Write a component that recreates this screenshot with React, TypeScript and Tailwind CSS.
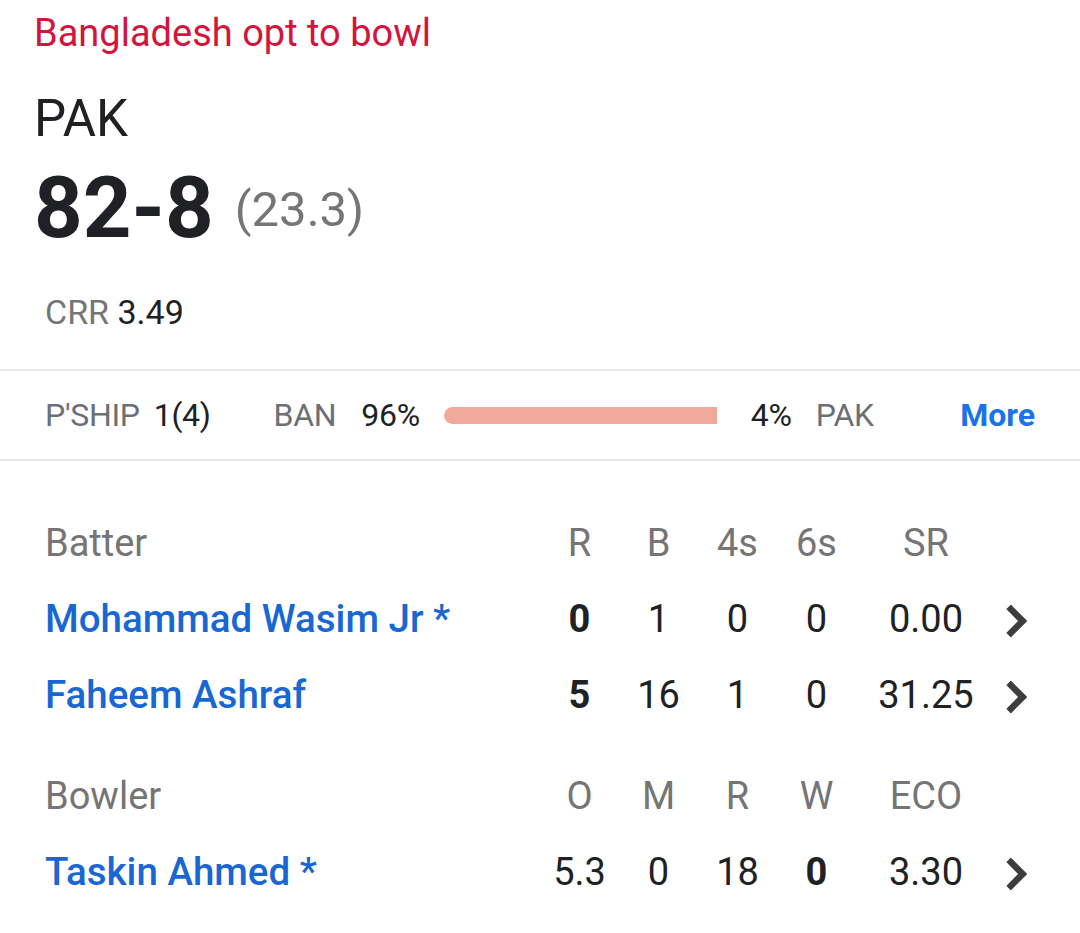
type StatRow = {
  name: string;
  cells: { v: string; bold?: boolean }[];
};

const batters: StatRow[] = [
  {
    name: 'Mohammad Wasim Jr *',
    cells: [{ v: '0', bold: true }, { v: '1' }, { v: '0' }, { v: '0' }, { v: '0.00' }],
  },
  {
    name: 'Faheem Ashraf',
    cells: [{ v: '5', bold: true }, { v: '16' }, { v: '1' }, { v: '0' }, { v: '31.25' }],
  },
];

const bowlers: StatRow[] = [
  {
    name: 'Taskin Ahmed *',
    cells: [{ v: '5.3' }, { v: '0' }, { v: '18' }, { v: '0', bold: true }, { v: '3.30' }],
  },
];

const cols = 'grid grid-cols-[495px_79px_79px_79px_79px_140px_40px] items-center';

function Chevron() {
  return (
    <svg
      viewBox="0 0 24 24"
      className="w-[62px] h-[62px] shrink-0 text-[#3d3d3d] mt-[3px]"
      fill="currentColor"
      stroke="currentColor"
      strokeWidth={0.5}
      strokeLinejoin="round"
    >
      <path d="M10 6L8.59 7.41 13.17 12l-4.58 4.59L10 18l6-6z" />
    </svg>
  );
}

function HeaderRow({ title, labels }: { title: string; labels: string[] }) {
  return (
    <div className={`${cols} h-[76px] text-[38px] text-[#757575]`}>
      <div>{title}</div>
      {labels.map((l) => (
        <div key={l} className="text-center">
          {l}
        </div>
      ))}
      <div />
    </div>
  );
}

function PlayerRow({ row }: { row: StatRow }) {
  return (
    <div className={`${cols} h-[76px]`}>
      <div className="text-[38.5px] font-medium text-[#1967d2] whitespace-nowrap">{row.name}</div>
      {row.cells.map((c, i) => (
        <div
          key={i}
          className={`text-center text-[38px] text-[#202124] ${c.bold ? 'font-bold' : ''}`}
        >
          {c.v}
        </div>
      ))}
      <div className="flex justify-center h-[40px] items-center">
        <Chevron />
      </div>
    </div>
  );
}

export default function App() {
  return (
    <div className="w-[1080px] h-[933px] bg-white font-['Roboto',sans-serif] overflow-hidden">
      {/* score header */}
      <div className="px-[35px]">
        <div className="h-[66px] leading-[66px] text-[38px] text-[#d3143c] -ml-[1px]">Bangladesh opt to bowl</div>
        <div className="mt-[24px] h-[58px] leading-[58px] text-[51px] text-[#202124] -ml-[1px]">PAK</div>
        <div className="mt-[12px] h-[98px] flex items-center gap-[21px] -ml-[1px]">
          <span className="text-[85px] font-bold text-[#202124]">82-8</span>
          <span className="text-[49px] text-[#757575] mt-[2px]">(23.3)</span>
        </div>
        <div className="mt-[34px] h-[40px] leading-[40px] pl-[10px] text-[34px]">
          <span className="text-[#757575]">CRR</span> <span className="text-[#202124]">3.49</span>
        </div>
      </div>

      {/* partnership */}
      <div className="mt-[37px] border-y-2 border-[#e8e8e8] h-[92px] flex items-center pl-[45px] pr-[45px] text-[32px] tracking-[-0.3px]">
        <span className="text-[#6b6f76]">P'SHIP</span>
        <span className="ml-[14px] text-[#202124]">1(4)</span>
        <span className="ml-[63px] text-[#6b6f76]">BAN</span>
        <span className="ml-[25px] text-[#202124]">96%</span>
        <div className="ml-[24px] w-[273px] h-[17px] rounded-l-full bg-[#f2a99c]" />
        <span className="ml-[34px] text-[#202124]">4%</span>
        <span className="ml-[24px] text-[#6b6f76]">PAK</span>
        <span className="ml-auto text-[#1a73e8] font-bold tracking-normal">More</span>
      </div>

      {/* batters & bowlers */}
      <div className="pl-[45px] mt-[44px]">
        <HeaderRow title="Batter" labels={['R', 'B', '4s', '6s', 'SR']} />
        {batters.map((r) => (
          <PlayerRow key={r.name} row={r} />
        ))}
        <div className="mt-[25px]">
          <HeaderRow title="Bowler" labels={['O', 'M', 'R', 'W', 'ECO']} />
          {bowlers.map((r) => (
            <PlayerRow key={r.name} row={r} />
          ))}
        </div>
      </div>
    </div>
  );
}
